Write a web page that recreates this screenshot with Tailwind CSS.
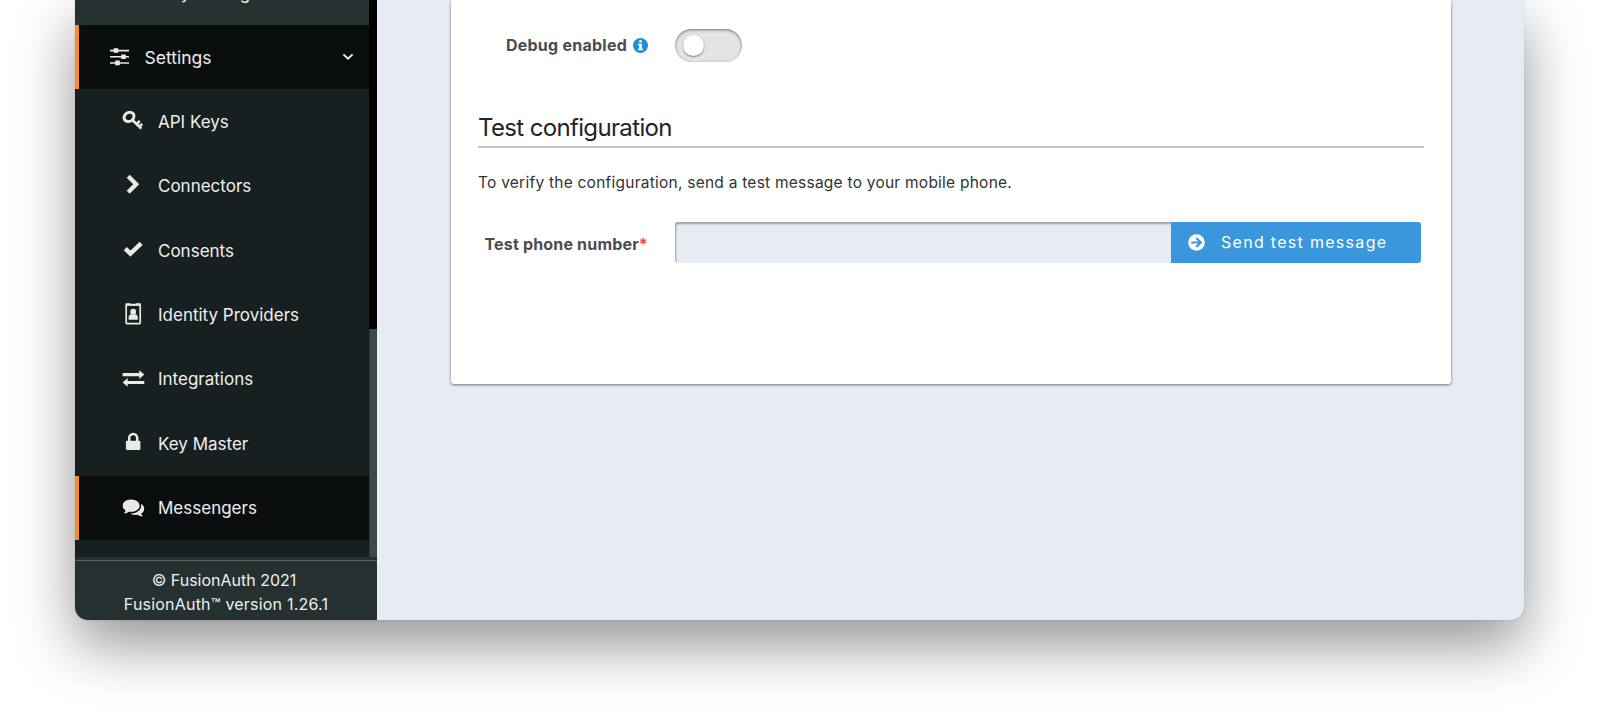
<!DOCTYPE html>
<html lang="en">
<head>
<meta charset="utf-8">
<title>FusionAuth</title>
<script src="https://cdn.jsdelivr.net/npm/@tailwindcss/browser@4"></script>
</head>
<body class="h-[720px] overflow-hidden bg-white pl-[75px] font-['Inter',sans-serif]">
<div class="flex h-[620px] w-[1449px] overflow-hidden rounded-b-[13px] bg-[#e7ebf3] shadow-[0_0_1px_rgba(0,0,0,0.45),0_25px_58px_rgba(0,0,0,0.42)]">
  <aside class="flex w-[302px] shrink-0 flex-col bg-[#253031] text-[#eeefef]">
    <div class="flex h-[557px] overflow-hidden">
      <nav class="w-[294px] text-[17px] leading-none">
        <div class="flex h-[24.5px] items-end overflow-hidden bg-[#263232] pl-[70px]"><span class="mb-[22.5px] whitespace-nowrap">Entity Management</span></div>
        <a class="flex h-[64.5px] items-center border-l-[4.5px] border-[#fb8c26] bg-[#0a0d0e] pl-[28.5px]">
          <svg class="size-6" viewBox="0 0 24 24" fill="#e8e9e9"><path d="M2 4.800h19v1.600H2zM2 10.900h19v1.600H2zM2 17.200h19v1.600H2z"/><path d="M5.600 3.200h4.600v4.600H5.600zM13.200 9.400h4.600V14h-4.600zM7.200 15.600h4.600v4.600H7.200z"/></svg>
          <span class="ml-[13px] flex-1 pt-[1px] text-[17.5px]">Settings</span>
          <svg class="mr-[15.5px] h-3 w-3" viewBox="0 0 12 12" fill="none" stroke="#eeefef" stroke-width="1.9"><path d="M1.400 3.400 6 7.800 10.600 3.400"/></svg>
        </a>
        <div class="bg-[#181f20]">
          <a class="flex h-[64.45px] items-center gap-[13px] pl-[46px]">
            <svg class="size-6" viewBox="0 0 24 24" fill="none" stroke="#e8e9e9"><path d="M3.200 9.800C2.200 5.500 6.800 2.400 10.600 3.600c3.200 1.100 3 5.200.6 7.400-2.600 2.400-7 2-8-1.200Z" stroke-width="2.900"/><path d="m11.300 11 9 8.600M15.700 15.200l3-3.300M18.600 17.600l2.500-2.700" stroke-width="2.600"/></svg>
            <span class="pt-[2px]">API Keys</span></a>
          <a class="flex h-[64.45px] items-center gap-[13px] pl-[46px]">
            <svg class="size-6" viewBox="0 0 24 24" fill="none" stroke="#e8e9e9" stroke-width="4.300"><path d="m7.200 2.200 8 8-8 8"/></svg>
            <span class="pt-[2px]">Connectors</span></a>
          <a class="flex h-[64.45px] items-center gap-[13px] pl-[46px]">
            <svg class="size-6" viewBox="0 0 24 24" fill="none" stroke="#e8e9e9" stroke-width="4.400"><path d="m4.300 10.600 5.100 5L20.200 5.400"/></svg>
            <span class="pt-[2px]">Consents</span></a>
          <a class="flex h-[64.45px] items-center gap-[13px] pl-[46px]">
            <svg class="size-6" viewBox="0 0 24 24"><rect x="5.200" y="1.600" width="14" height="19" rx=".8" fill="none" stroke="#e8e9e9" stroke-width="1.700"/><path d="M4.600.3h4.500l1 1.300h4.200l1-1.300h4.500v2.500H4.600z" fill="#e8e9e9"/><circle cx="12.200" cy="8.700" r="2.900" fill="#e8e9e9"/><path d="M7.600 16.800v-2.200c0-2 1-3.200 2.600-3.400h4c1.600.2 2.600 1.400 2.600 3.400v2.200z" fill="#e8e9e9"/></svg>
            <span class="pt-[2px]">Identity Providers</span></a>
          <a class="flex h-[64.45px] items-center gap-[13px] pl-[46px]">
            <svg class="size-6" viewBox="0 0 24 24" fill="#e8e9e9"><path d="M1.600 6.100h16.600V3.300l5.100 4.300-5.100 4.300V9.200H1.600zM23.300 17H6.700v2.700l-5.100-4.300 5.100-4.300V13.900h16.600z"/></svg>
            <span class="pt-[2px]">Integrations</span></a>
          <a class="flex h-[64.45px] items-center gap-[13px] pl-[46px]">
            <svg class="size-6" viewBox="0 0 24 24"><rect x="4.900" y="9.800" width="14.500" height="9.200" rx="1.200" fill="#e8e9e9"/><path d="M8.200 10.200V7a4 4 0 0 1 8 0v3.200" fill="none" stroke="#e8e9e9" stroke-width="2.500"/></svg>
            <span class="pt-[2px]">Key Master</span></a>
          <a class="flex h-[64.45px] items-center gap-[13px] border-l-[4.5px] border-[#fb8c26] bg-[#0a0d0e] pl-[42px]">
            <svg class="size-6" viewBox="0 0 24 24"><svg x="1.500" y="0.300" width="21.800" height="21.800" viewBox="0 0 1792 1792" fill="#e8e9e9"><path d="M1408 768q0 139-94 257t-256.500 186.500-353.500 68.500q-86 0-176-16-124 88-278 128-36 9-86 16h-3q-11 0-20.500-8t-11.500-21q-1-3-1-6.500t.5-6.500 2-6l2.500-5 3.500-5.500 4-5 4.500-5 4-4.500q5-6 23-25t26-29.500 22.500-29 25-38.500 20.500-44q-124-72-195-177t-71-224q0-139 94-257t256.500-186.500 353.500-68.500 353.500 68.500 256.500 186.500 94 257zm384 256q0 120-71 224.500t-195 176.500q10 24 20.500 44t25 38.500 22.500 29 26 29.500 23 25q1 1 4 4.500t4.500 5 4 5 3.500 5.500l2.500 5 2 6 .5 6.500-1 6.500q-3 14-13 22t-22 7q-50-7-86-16-154-40-278-128-90 16-176 16-271 0-472-132 58 4 88 4 161 0 309-45t264-129q125-92 192-212t67-254q0-77-23-152 129 71 204 178t75 230z"/></svg></svg>
            <span class="pt-[2px]">Messengers</span></a>
          <div class="h-5"></div>
        </div>
      </nav>
      <div class="flex w-2 flex-col bg-black"><div class="mt-[329px] flex-1 border-l border-[#2b3738] bg-[#3c4a4c]"></div></div>
    </div>
    <footer class="mt-[3px] flex-1 border-t border-[#566061] pt-[7px] text-center text-[16px] leading-[24px]">
      <div class="-ml-[4px]">© FusionAuth 2021</div>
      <div class="tracking-[0.2px]">FusionAuth™ version 1.26.1</div>
    </footer>
  </aside>
  <main class="flex-1 pl-[74px]">
    <section class="h-[384px] w-[1000px] rounded-b-[3px] bg-white px-[27px] pt-[29px] shadow-[0_1px_3px_rgba(40,50,55,0.65)]">
      <div class="flex h-[33px] items-center">
        <div class="flex w-[170px] items-center justify-end gap-[6px]">
          <span class="-mt-[1px] text-[16px] font-bold tracking-[0.25px] whitespace-nowrap text-[#4a4d4f]">Debug enabled</span>
          <svg class="size-[15px]" viewBox="0 0 15 15"><circle cx="7.500" cy="7.500" r="7.500" fill="#1e8fd5"/><path d="M6.200 2.300h2.600v2.200H6.200zM5 5.700h3.900v5h1.200v1.600H5v-1.600h1.200V7.300H5z" fill="#fff"/></svg>
        </div>
        <div class="ml-[27px] h-[33px] w-[67px] rounded-full bg-[#e4e4e4] pt-[6px] pl-[8px] shadow-[inset_0_1px_3px_rgba(0,0,0,0.5)]"><div class="size-[21px] rounded-full bg-white shadow-[0_1px_2px_rgba(0,0,0,0.45)]"></div></div>
      </div>
      <h2 class="mt-[50px] h-[36px] border-b-2 border-[#c6c8c8] text-[24px] leading-[31px] tracking-[-0.65px] text-[#202426]">Test configuration</h2>
      <p class="mt-[23px] text-[15.5px] leading-[24px] tracking-[0.24px] text-[#303436]">To verify the configuration, send a test message to your mobile phone.</p>
      <div class="mt-[27px] flex h-[41px]">
        <label class="w-[170px] text-right text-[16px] leading-[44px] font-bold tracking-[0.18px] whitespace-nowrap text-[#4a4d4f]">Test phone number<span class="text-[#fa3f50]">*</span></label>
        <div class="ml-[27px] w-[496px] rounded-l-[3px] bg-[#e6ebf4] shadow-[inset_1px_2px_2px_rgba(0,0,0,0.32)]"></div>
        <button class="flex w-[250px] items-center rounded-r-[3px] bg-[#3a97dc] pl-[17px] text-[16px] text-white">
          <svg class="size-[17px]" viewBox="0 0 17 17"><circle cx="8.500" cy="8.500" r="8.300" fill="#fff"/><path d="M3.300 8.500h9M8.300 4l4.500 4.500L8.300 13" fill="none" stroke="#3a97dc" stroke-width="2.200"/></svg>
          <span class="-mt-[1px] ml-[16px] tracking-[1.300px]">Send test message</span>
        </button>
      </div>
    </section>
  </main>
</div>
</body>
</html>
